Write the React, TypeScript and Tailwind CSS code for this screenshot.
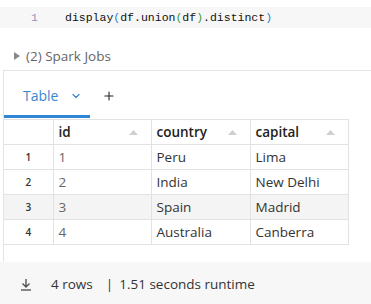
import { ChevronDown, Plus } from "lucide-react";

type Row = { id: number; country: string; capital: string };

const rows: Row[] = [
  { id: 1, country: "Peru", capital: "Lima" },
  { id: 2, country: "India", capital: "New Delhi" },
  { id: 3, country: "Spain", capital: "Madrid" },
  { id: 4, country: "Australia", capital: "Canberra" },
];

function SortUp() {
  return (
    <svg width="9" height="5" viewBox="0 0 9 5" className="shrink-0">
      <path d="M0 5 L4.5 0 L9 5 Z" fill="#cfcfcf" />
    </svg>
  );
}

function HeadCell({ label }: { label: string }) {
  return (
    <th className="border-l border-[#e2e2e2] px-[5px] text-left text-[13.5px] font-semibold text-[#222]">
      <div className="flex items-center justify-between pr-[8px]">
        <span>{label}</span>
        <SortUp />
      </div>
    </th>
  );
}

export default function App() {
  return (
    <div
      className="h-[304px] w-[371px] overflow-hidden bg-white text-[13px] text-[#333]"
      style={{ fontFamily: '"Open Sans", "Noto Sans", sans-serif' }}
    >
      {/* code cell */}
      <div className="mt-[7px] flex h-[21px] items-center bg-[#f7f7f7] text-[11.5px]" style={{ fontFamily: '"Liberation Mono", monospace' }}>
        <span className="w-[65px] pl-[31px] text-[#9d8fba]">1</span>
        <span className="font-medium text-[#111]">
          display<span className="text-[#2f7ad1]">(</span>df.union<span className="text-[#3a9a3a]">(</span>df
          <span className="text-[#3a9a3a]">)</span>.distinct<span className="text-[#2f7ad1]">)</span>
        </span>
      </div>

      {/* spark jobs */}
      <div className="mt-[14px] flex h-[28px] items-center pl-[14px] text-[13.5px] text-[#666]">
        <svg width="6" height="8" viewBox="0 0 6 8" className="mr-[6px]">
          <path d="M0 0 L6 4 L0 8 Z" fill="#888" />
        </svg>
        <span>(2) Spark Jobs</span>
      </div>

      {/* output panel */}
      <div className="ml-[3px] h-[192px] border-l border-t border-[#e4e4e4] bg-white">
        <div className="flex h-[47px] items-end">
          <div className="flex h-full w-[86px] items-center border-b-[3px] border-[#2f86d6] pl-[19px] pt-[5px] text-[14px] text-[#3a87d0]">
            <span>Table</span>
            <ChevronDown size={12} strokeWidth={2.5} className="ml-[12px] text-[#3a87d0]" />
          </div>
          <div className="flex h-full items-center pb-[3px] pl-[12px] pt-[5px] text-[#222]">
            <Plus size={14} strokeWidth={1.8} />
          </div>
        </div>

        <table className="mt-[1px] w-[345px] border-collapse border-r border-b border-[#e2e2e2]">
          <thead>
            <tr className="h-[25px] border-y border-[#e2e2e2]">
              <th className="w-[49px]" />
              <HeadCell label="id" />
              <HeadCell label="country" />
              <HeadCell label="capital" />
            </tr>
          </thead>
          <tbody>
            {rows.map((r, i) => (
              <tr
                key={r.id}
                className={`h-[25px] border-b border-[#e2e2e2] ${i === 2 ? "bg-[#f4f4f4]" : "bg-white"}`}
              >
                <td className="w-[49px] text-center text-[10px] font-semibold text-[#333]">{i + 1}</td>
                <td className="w-[98px] border-l border-[#e2e2e2] px-[5px] text-[13.5px] text-[#666]">{r.id}</td>
                <td className="w-[99px] border-l border-[#e2e2e2] px-[5px] text-[13.5px]">{r.country}</td>
                <td className="border-l border-[#e2e2e2] px-[5px] text-[13.5px]">{r.capital}</td>
              </tr>
            ))}
          </tbody>
        </table>
      </div>

      {/* footer */}
      <div className="flex h-[42px] items-center bg-[#f7f7f7] pt-[3px] pl-[20px] text-[13.5px] text-[#333]">
        <svg width="12" height="13" viewBox="0 0 12 13" className="mr-[19px]">
          <path d="M6 1 V9 M2.5 5.5 L6 9 L9.5 5.5" stroke="#555" strokeWidth="1.4" fill="none" />
          <path d="M1 12 H11" stroke="#555" strokeWidth="1.4" />
        </svg>
        <span>4 rows</span>
        <span className="ml-[13px] mr-[6px]">|</span>
        <span>1.51 seconds runtime</span>
      </div>
    </div>
  );
}
